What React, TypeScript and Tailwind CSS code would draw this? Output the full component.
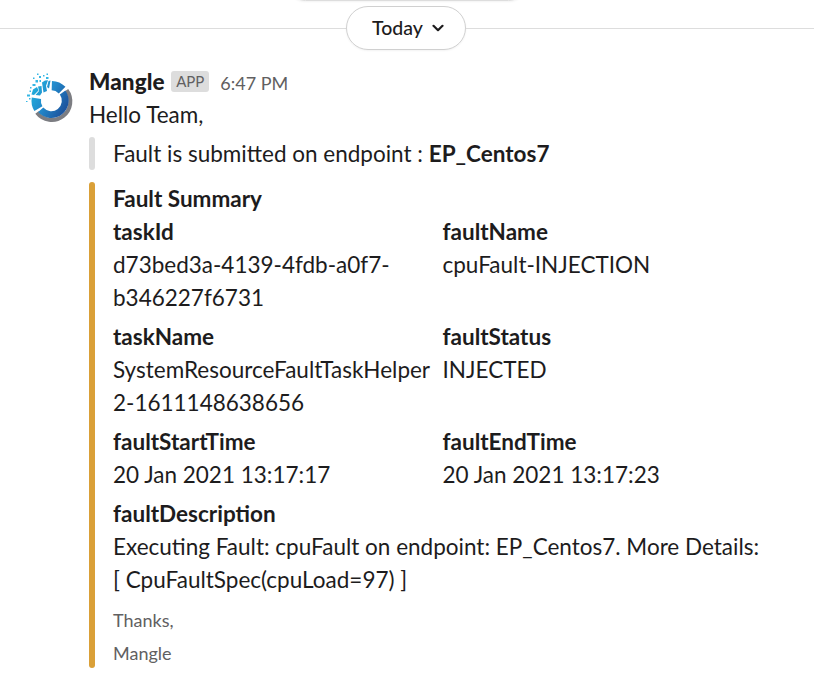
const fields = [
  { name: 'taskId', lines: ['d73bed3a-4139-4fdb-a0f7-', 'b346227f6731'] },
  { name: 'faultName', lines: ['cpuFault-INJECTION'] },
  { name: 'taskName', lines: ['SystemResourceFaultTaskHelper', '2-1611148638656'] },
  { name: 'faultStatus', lines: ['INJECTED'] },
  { name: 'faultStartTime', lines: ['20 Jan 2021 13:17:17'] },
  { name: 'faultEndTime', lines: ['20 Jan 2021 13:17:23'] },
];

function Logo() {
  return (
    <svg width="54" height="54" viewBox="0 0 54 54" className="block">
      <defs>
        <linearGradient id="ring" x1="9" y1="16" x2="44" y2="36" gradientUnits="userSpaceOnUse">
          <stop offset="0" stopColor="#20b4df" />
          <stop offset="0.5" stopColor="#2289cb" />
          <stop offset="1" stopColor="#1d569f" />
        </linearGradient>
      </defs>
      <path d="M44.600 20.100A18.600 18.600 0 1 1 14.900 42.500" fill="none" stroke="#7c7d82" strokeWidth="4" />
      <g fill="none" stroke="url(#ring)">
        <path d="M29.800 15.600A15.200 15.200 0 0 1 40.100 20.100" strokeWidth="9.4" />
        <path d="M40.600 22.400A14 14 0 0 1 18.700 39.800" strokeWidth="6.8" />
        <path d="M16.400 38.600A15.200 15.200 0 0 1 14.400 28.200" strokeWidth="9.4" />
      </g>
      <g fill="url(#ring)">
        <path d="M11 19.500l4-2.500 1.500 3.500-4.500 4.500-2.500-.5z" />
        <path d="M16 16.500l3.500-.5.5 6.500-2 3-4.500-.5 3.500-4z" />
        <path d="M20 12.500l3-2 3-.3-2 5.500 1 5.300-3.500 1.500z" />
        <path d="M26.500 11l2-.5-1.500 8-2-1.500z" />
      </g>
      <g fill="#35b7e5">
        <path d="M15 3.500h1.500V5H15zM24.500 3.500H26V5h-1.500zM17 6h2v2h-2zM21 5h1.500v1.500H21zM24 7h2.500v2H24zM11 7.500h1.500V9H11zM13.500 10h2.500v2.500h-2.500zM17.500 10h1.500v2h-1.500zM10.500 14h3v2h-3zM8 17h1.500v1.500H8zM7.500 20.500H9V22H7.500zM5 24.500h3v2H5zM7 28h1.500v1.500H7zM4 31h1.500v1H4z" />
      </g>
    </svg>
  );
}

export default function App() {
  return (
    <main className="h-[693px] w-[814px] overflow-hidden bg-white font-['Lato',sans-serif] text-[22.5px] leading-[33px] text-[#1d1c1d]">
      <header className="relative flex h-[56px] items-center">
        <div className="absolute -top-[40px] left-[285px] h-[41px] w-[244px] rounded-full border border-[#ddd] shadow-xs" />
        <div className="h-px w-[346px] bg-[#ddd]" />
        <button className="flex h-[44px] w-[120px] items-center justify-center gap-[9px] rounded-full border border-[#d0d0d0] pb-[2px] pl-[4px] text-[19.5px] font-medium shadow-xs">
          Today
          <svg width="12" height="8" viewBox="0 0 12 8" fill="none" stroke="#1d1c1d" strokeWidth="2.2" strokeLinecap="round" strokeLinejoin="round" className="mt-px">
            <path d="M1.500 1.800L6 6.200l4.500-4.400" />
          </svg>
        </button>
        <div className="h-px flex-1 bg-[#ddd]" />
      </header>
      <article className="flex pt-[9px]">
        <div className="w-[89px] pl-[22px] pt-[5px]"><Logo /></div>
        <div className="flex-1">
          <div className="flex h-[33px] items-center">
            <span className="font-black tracking-[0.1px]">Mangle</span>
            <span className="ml-[6.5px] w-[38px] rounded-[3px] bg-[#ddd] text-center text-[15px] leading-[21px] text-[#616061]">APP</span>
            <span className="ml-[11px] pt-[4px] text-[18px] text-[#616061]">6:47 PM</span>
          </div>
          <p>Hello Team,</p>
          <div className="mt-[6px] flex">
            <div className="w-[6px] rounded bg-[#ddd]" />
            <p className="pl-[18px]">Fault is submitted on endpoint : <b>EP_Centos7</b></p>
          </div>
          <section className="mt-3 flex">
            <div className="mb-[2px] w-[6px] rounded bg-[#daa038]" />
            <div className="pl-[18px]">
              <h2 className="font-bold">Fault Summary</h2>
              <dl className="grid grid-cols-[329.5px_330px] gap-y-[6px]">
                {fields.map((f) => (
                  <div key={f.name}>
                    <dt className="font-bold">{f.name}</dt>
                    {f.lines.map((l) => <dd key={l} className="whitespace-nowrap">{l}</dd>)}
                  </div>
                ))}
              </dl>
              <div className="mt-[6px]">
                <b>faultDescription</b>
                <p>Executing Fault: cpuFault on endpoint: EP_Centos7. More Details:</p>
                <p>[ CpuFaultSpec(cpuLoad=97) ]</p>
              </div>
              <footer className="mt-2 text-[18px] text-[#616061]"><p>Thanks,</p><p>Mangle</p></footer>
            </div>
          </section>
        </div>
      </article>
    </main>
  );
}
